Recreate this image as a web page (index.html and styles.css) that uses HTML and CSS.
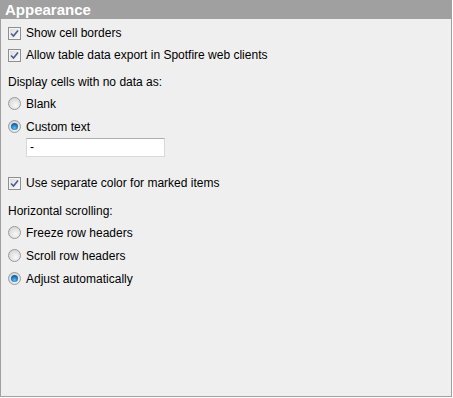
FILE: index.html
```html
<!DOCTYPE html>
<html lang="en">
<head>
    <meta charset="UTF-8">
    <title>Appearance</title>
    <link rel="stylesheet" href="styles.css">
</head>
<body>
    <div class="panel">
        <div class="header">Appearance</div>
        <div class="content">
            <div class="row">
                <span class="check"><svg viewBox="0 0 9 9" width="9" height="9"><path d="M1 4.5 L3.5 7 L8 1.5" fill="none" stroke="#4a5c92" stroke-width="1.6"/></svg></span>
                <span>Show cell borders</span>
            </div>
            <div class="row">
                <span class="check"><svg viewBox="0 0 9 9" width="9" height="9"><path d="M1 4.5 L3.5 7 L8 1.5" fill="none" stroke="#4a5c92" stroke-width="1.6"/></svg></span>
                <span>Allow table data export in Spotfire web clients</span>
            </div>

            <div class="label first-label">Display cells with no data as:</div>
            <div class="row radio-row first-radio">
                <span class="radio"></span>
                <span>Blank</span>
            </div>
            <div class="row radio-row">
                <span class="radio on"></span>
                <span>Custom text</span>
            </div>
            <div class="textbox">-</div>

            <div class="row marked">
                <span class="check"><svg viewBox="0 0 9 9" width="9" height="9"><path d="M1 4.5 L3.5 7 L8 1.5" fill="none" stroke="#4a5c92" stroke-width="1.6"/></svg></span>
                <span>Use separate color for marked items</span>
            </div>

            <div class="label second-label">Horizontal scrolling:</div>
            <div class="row radio-row first-radio">
                <span class="radio"></span>
                <span>Freeze row headers</span>
            </div>
            <div class="row radio-row">
                <span class="radio"></span>
                <span>Scroll row headers</span>
            </div>
            <div class="row radio-row">
                <span class="radio on"></span>
                <span>Adjust automatically</span>
            </div>
        </div>
    </div>
</body>
</html>
```

FILE: styles.css
```css
* {
    box-sizing: border-box;
}
body {
    margin: 0;
    font-family: "Liberation Sans", Arial, sans-serif;
    font-size: 12px;
    color: #000;
    background: #fff;
}
.panel {
    width: 452px;
    height: 397px;
    border: 1px solid #a0a0a0;
    background-color: #efefef;
}
.header {
    height: 18px;
    background-color: #a0a0a0;
    color: #fff;
    font-weight: bold;
    font-size: 15px;
    line-height: 18px;
    padding-left: 4px;
}
.content {
    padding: 3px 0 0 7px;
}
.row {
    display: flex;
    align-items: center;
    gap: 5px;
    height: 22px;
}
.radio-row {
    height: 23px;
}
.label {
    line-height: 16px;
    height: 16px;
}
.first-label {
    margin-top: 8px;
}
.second-label {
    margin-top: 9px;
}
.first-radio {
    margin-top: 2px;
}
.marked {
    margin-top: 15px;
}

/* checkbox */
.check {
    width: 13px;
    height: 13px;
    border: 1px solid #8e8f8f;
    background: linear-gradient(135deg, #dcdcdc, #fafafa);
    display: flex;
    align-items: center;
    justify-content: center;
    box-shadow: inset 0 0 0 1px #f4f4f4;
}
.check svg {
    display: block;
}

/* radio */
.radio {
    width: 13px;
    height: 13px;
    border-radius: 50%;
    border: 1px solid #9a9a9a;
    background: radial-gradient(circle at 60% 65%, #f8f8f8 0, #e2e2e2 50%, #cfcfcf 100%);
    position: relative;
}
.radio.on::after {
    content: "";
    position: absolute;
    left: 2px;
    top: 2px;
    width: 7px;
    height: 7px;
    border-radius: 50%;
    background: radial-gradient(circle at 50% 70%, #5fc4f4 0, #1f7fc4 45%, #0d3f73 100%);
}

.textbox {
    margin: 0 0 0 18px;
    width: 139px;
    height: 19px;
    border: 1px solid #d8d9dc;
    border-top-color: #abadb3;
    background: #fff;
    padding-left: 3px;
    line-height: 17px;
}
```
